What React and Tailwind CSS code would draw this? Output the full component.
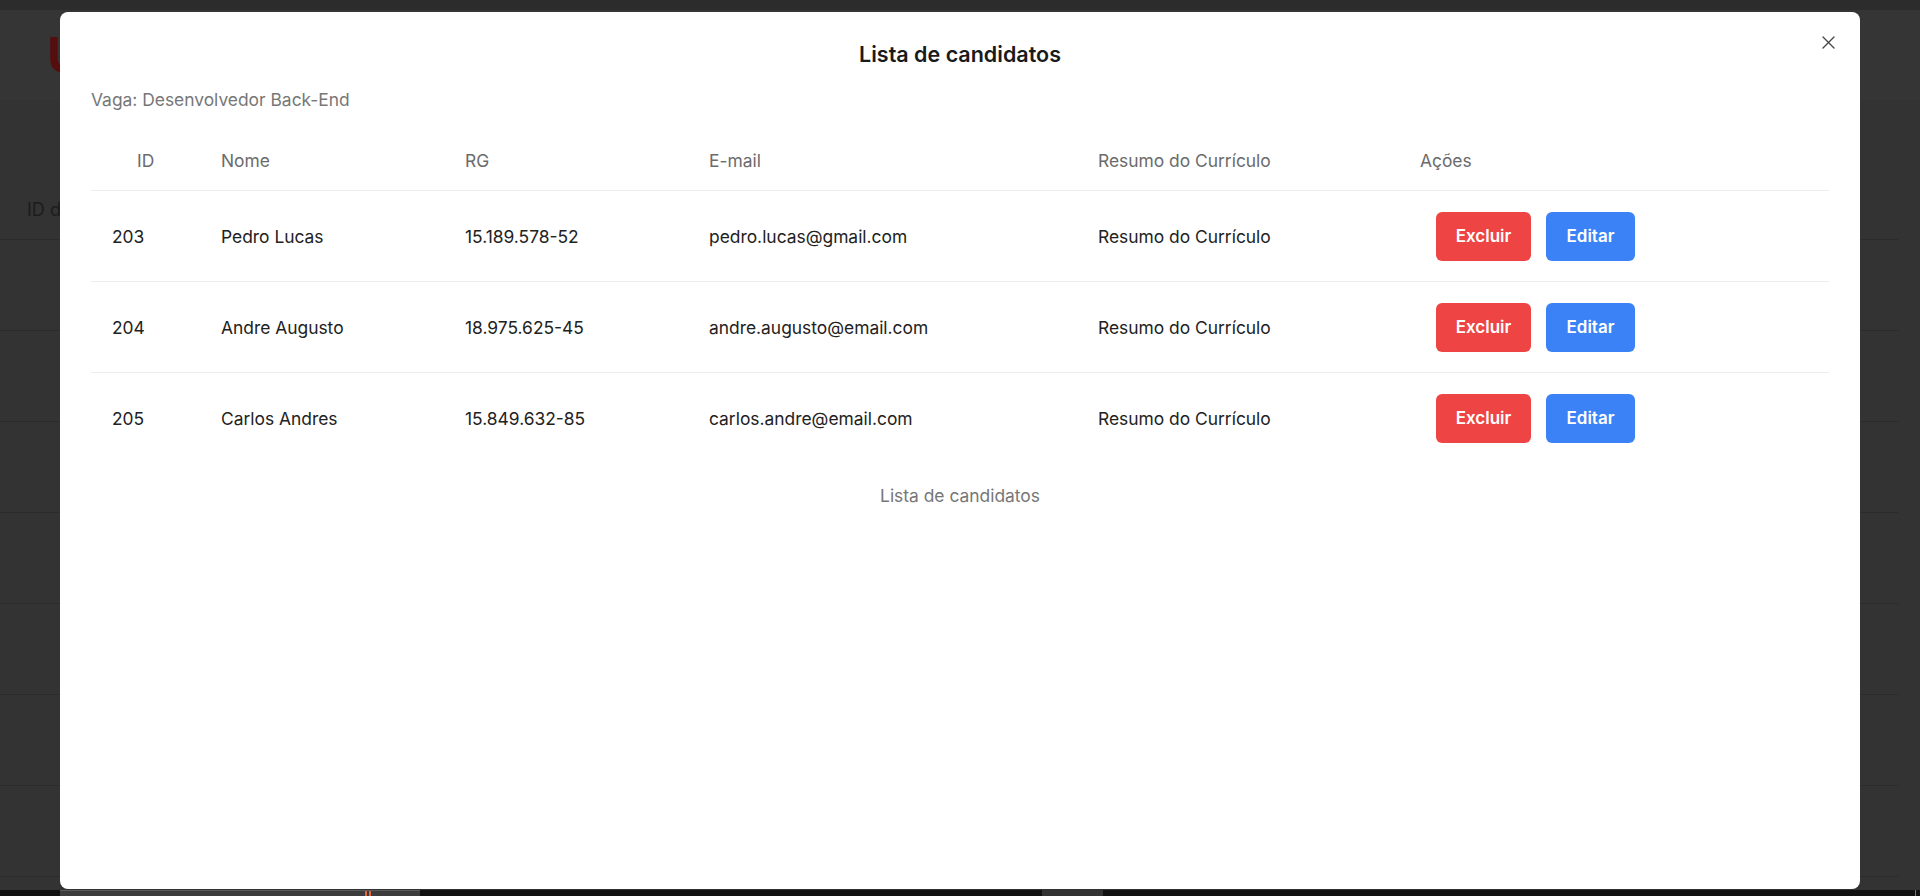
const candidatos = [
  { id: 203, nome: "Pedro Lucas", rg: "15.189.578-52", email: "pedro.lucas@gmail.com" },
  { id: 204, nome: "Andre Augusto", rg: "18.975.625-45", email: "andre.augusto@email.com" },
  { id: 205, nome: "Carlos Andres", rg: "15.849.632-85", email: "carlos.andre@email.com" },
];

const cols = "grid grid-cols-[114px_244px_244px_389px_322px_1fr] items-center";

function BackgroundPage() {
  return (
    <div className="flex-1 flex flex-col">
      <div className="h-[10px] bg-[#2c2c2c]" />
      <div className="h-[90px] bg-[#353535] flex items-center pl-[47px]">
        <span className="text-[50px] font-bold leading-none text-[#550d0d]">U</span>
      </div>
      <div className="h-[140px] flex items-end pb-[16px] pl-[27px] border-b border-[#2b2b2b] w-[1898px]">
        <span className="text-[18px] text-[#1c1c1c]">ID da vaga</span>
      </div>
      {[0, 1, 2, 3, 4, 5, 6].map((i) => (
        <div key={i} className="h-[91px] w-[1898px] border-b border-[#2b2b2b]" />
      ))}
    </div>
  );
}

function BottomBar() {
  return (
    <div className="h-[6px] bg-[#111] flex relative">
      <div className="ml-[60px] w-[360px] bg-[#3c3c3c] border-t border-[#5a5a5a] relative">
        <div className="absolute left-[305px] top-0 w-[2px] h-[5px] bg-[#e8643a]" />
        <div className="absolute left-[309px] top-0 w-[2px] h-[5px] bg-[#e8643a]" />
      </div>
      <div className="ml-[622px] w-[61px] bg-[#333]" />
      <div className="ml-auto mr-[4px] w-[1px] bg-[#777]" />
    </div>
  );
}

function CloseIcon() {
  return (
    <svg width="13" height="13" viewBox="0 0 13 13" fill="none">
      <path d="M1 1 L12 12 M12 1 L1 12" stroke="#4a4a4a" strokeWidth="1.4" strokeLinecap="round" />
    </svg>
  );
}

function Modal() {
  return (
    <div className="absolute left-[60px] top-[12px] w-[1800px] h-[877px] bg-white rounded-lg px-[31px]">
      <button className="absolute top-[24px] right-[25px] p-0">
        <CloseIcon />
      </button>
      <h2 className="pt-[27px] text-center text-[21.5px] leading-[30px] font-semibold text-[#1a1a1a]">
        Lista de candidatos
      </h2>
      <p className="mt-[17px] text-[17.4px] leading-[27px] text-[#777]">Vaga: Desenvolvedor Back-End</p>
      <div className="mt-[17px] text-[17.4px] leading-[27px]">
        <div className={`${cols} h-[61px] border-b border-[#ededed] text-[#6b6b6b]`}>
          <div className="pl-[46px]">ID</div>
          <div className="pl-4">Nome</div>
          <div className="pl-4">RG</div>
          <div className="pl-4">E-mail</div>
          <div className="pl-4">Resumo do Currículo</div>
          <div className="pl-4">Ações</div>
        </div>
        {candidatos.map((c, i) => (
          <div
            key={c.id}
            className={`${cols} h-[91px] text-[#222] ${i < candidatos.length - 1 ? "border-b border-[#ededed]" : ""}`}
          >
            <div className="pl-[21px]">{c.id}</div>
            <div className="pl-4">{c.nome}</div>
            <div className="pl-4">{c.rg}</div>
            <div className="pl-4">{c.email}</div>
            <div className="pl-4">Resumo do Currículo</div>
            <div className="pl-8 flex gap-[15px]">
              <button className="h-[49px] w-[95px] rounded-md bg-[#ef4444] text-white text-[17px] font-semibold">
                Excluir
              </button>
              <button className="h-[49px] w-[89px] rounded-md bg-[#3b82f6] text-white text-[17px] font-semibold">
                Editar
              </button>
            </div>
          </div>
        ))}
        <p className="pt-[18px] text-center text-[#777]">Lista de candidatos</p>
      </div>
    </div>
  );
}

export default function App() {
  return (
    <div className="relative h-[896px] w-full overflow-hidden bg-[#333] flex flex-col font-['Inter',sans-serif]">
      <BackgroundPage />
      <BottomBar />
      <Modal />
    </div>
  );
}
